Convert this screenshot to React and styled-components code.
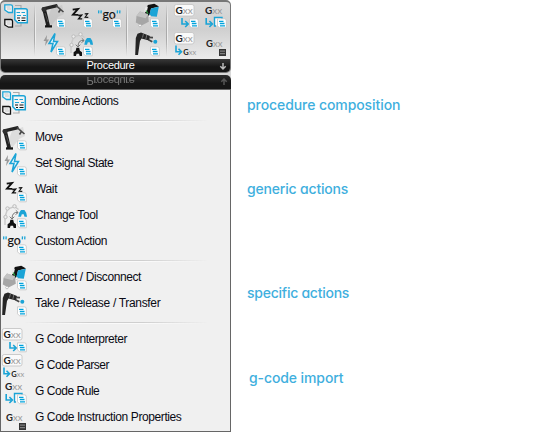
import React from 'react';
import styled, { createGlobalStyle } from 'styled-components';

const GlobalStyle = createGlobalStyle`
  * { box-sizing: border-box; }
  body { margin: 0; background: #fff; font-family: "Liberation Sans", Arial, sans-serif; }
`;

const Page = styled.div`
  display: grid;
  grid-template-columns: 231px 1fr;
  width: 542px;
  height: 432px;
  overflow: hidden;
`;
const Panel = styled.div`
  display: flex;
  flex-direction: column;
  height: 432px;
  background: linear-gradient(#fff 40px, #d8d8d8 40px);
`;
const Ribbon = styled.section`
  height: 73px;
  border: 1px solid #777;
  border-top: 2px solid #777;
  border-radius: 5px;
  overflow: hidden;
  background: linear-gradient(#dadada, #d0d0d0 40%, #eeeeee 85%);
`;
const Tools = styled.div`
  display: grid;
  grid-template-columns: 24px 13px 24px 3px 24px 5px 24px 14px 24px 15px 24px 4px 24px;
  grid-template-rows: 24px 24px;
  row-gap: 4px;
  padding: 2px 0 0 3px;
  height: 57px;
`;
const Tool = styled.div`
  grid-column: ${p => p.$col};
  grid-row: ${p => p.$row};
  width: 24px;
  height: 24px;
`;
const ToolDivider = styled.div`
  grid-column: ${p => p.$col};
  grid-row: 1 / 3;
  width: 2px;
  height: 52px;
  margin-left: ${p => p.$inset}px;
  background: linear-gradient(90deg, #aaa 50%, #eee 50%);
  mask-image: linear-gradient(transparent, #000 30%, #000 70%, transparent);
`;
const Caption = styled.div`
  display: grid;
  grid-template-columns: 1fr 11px;
  align-items: center;
  height: ${p => (p.$mirrored ? 14 : 13)}px;
  line-height: 12px;
  font-size: 11px;
  text-align: center;
  padding-left: 1px;
  color: ${p => (p.$mirrored ? '#777' : '#fff')};
  background: ${p => (p.$mirrored ? 'linear-gradient(#2c2c2c, #161616 60%)' : 'linear-gradient(#383838, #151515 60%)')};
  border-radius: ${p => (p.$mirrored ? '5px 5px 0 0' : '0')};
  margin-top: ${p => (p.$mirrored ? 2 : 0)}px;
`;
const CaptionText = styled.span`
  letter-spacing: -0.3px;
  padding-bottom: 4px;
  ${p => p.$mirrored && 'transform: scaleY(-1); padding-bottom: 0; margin-bottom: 2px;'}
`;
const Menu = styled.div`
  flex: 1;
  border: 1px solid #666;
  padding-left: 1px;
  background: #f0f0f0;
`;
const MenuRow = styled.div`
  display: grid;
  grid-template-columns: 33px 1fr;
  align-items: center;
  height: ${p => p.$h || 26}px;
  font-size: 12px;
  color: #0a0a14;
  white-space: nowrap;
`;
const MenuLabel = styled.span`
  line-height: 16px;
  padding-bottom: 3px;
  letter-spacing: ${p => p.$ls}px;
`;
const Separator = styled.div`
  height: 10px;
  padding: 5px 22px 0 22px;
  &::after {
    content: '';
    display: block;
    height: 2px;
    background: linear-gradient(#cfcfcf 50%, #fafafa 50%);
    mask-image: linear-gradient(90deg, transparent, #000 35%, #000 65%, transparent);
  }
`;
const Notes = styled.div`
  display: grid;
  grid-template-rows: 84px 104px 85px 30px;
  padding: 95px 0 0 16px;
  font-family: Inter, sans-serif;
  font-size: 14px;
  font-weight: 450;
  line-height: 20px;
  font-feature-settings: "cv11", "ss03";
  color: #3fafde;
`;
const Note = styled.div`
  margin-left: ${p => p.$indent || 0}px;
  letter-spacing: ${p => p.$ls || 0}px;
  white-space: nowrap;
`;
const Glyph = styled.svg`
  display: block;
  width: 24px;
  height: 24px;
  overflow: visible;
  font-family: Lato, "Open Sans", sans-serif;
`;

const BLUE = '#1ba4d6';

const Sheet = () => (
  <g>
    <path d="M15.5 14.8h6.8q2 0 2 2v7h-6.8l-2-2z" fill="#fff" stroke="#c4c4c4" strokeWidth=".8" />
    <path d="M17 17.3h4.5M17.8 19.5h4.7M18 21.8h5" stroke="#00a2dc" strokeWidth="1.3" />
  </g>
);
const Turn = ({ x = 7 }) => (
  <path d={`M${x} 14v6h5M${x + 3.2} 17l3 3-3 3`} fill="none" stroke={BLUE} strokeWidth="1.6" />
);
const Code = ({ boxed, x = 1.4, y = 9.5, size = 10 }) => (
  <g>
    {boxed && <rect x=".3" y=".5" width="19.7" height="11.5" rx="2" fill="#fafafa" stroke="#c6c6c6" strokeWidth=".9" />}
    <text x={x} y={y} fontSize={size} fontWeight="700" fill="#222">
      G<tspan fontWeight="400" fill="#999">xx</tspan>
    </text>
  </g>
);

const ICONS = {
  combine: (
    <g fill="#f4f4f4">
      <path d="M11 1.5h6v4M11 22h6v-4" fill="none" stroke="#aaa" strokeWidth="1.2" />
      <path d="M.8.8h6q1.7 0 1.7 1.7v6h-4L.8 6z" stroke={BLUE} strokeWidth="1.3" />
      <path d="M2.5 3h4M3 5h4" stroke="#bbb" strokeWidth=".8" />
      <path d="M.8 15.5h6q1.7 0 1.7 1.7v6h-4L.8 21z" stroke="#111" strokeWidth="1.3" />
      <path d="M2.5 18h4M3 20h4" stroke="#bbb" strokeWidth=".8" />
      <path d="M10.8 4.8h10.5q2 0 2 2v12h-9.5l-3-3z" stroke={BLUE} strokeWidth="1.5" />
      <path d="M12.5 8.5h3.5M17.5 8.5H21M13 11.5h4M19 11.5h3" stroke={BLUE} strokeWidth="1.2" />
      <path d="M13 14h3M17.5 14h4M14 16.5h2M17.5 16.5h4" stroke="#111" strokeWidth="1.2" />
    </g>
  ),
  move: (
    <g>
      <path d="M10 5l11-4 2 9-6 3-7 9-3-9z" fill="#999" opacity=".22" />
      <path d="M3.3 6L7.2 22" stroke="#202020" strokeWidth="3.7" />
      <path d="M2.3 4.8L15 1.8" stroke="#252525" strokeWidth="3.4" strokeLinecap="round" />
      <path d="M15 1.5l4.7 4.2M17.5 8.5l2-3 3 2.5" fill="none" stroke="#484848" strokeWidth="1.6" />
      <circle cx="3" cy="5.5" r="2.4" fill="#303030" />
      <path d="M4 21.3h7v2.3H4z" fill="#151515" />
      <path d="M4 9l3 9" stroke="#686868" strokeWidth=".6" />
      <Sheet />
    </g>
  ),
  signal: (
    <g>
      <path d="M6 3L2.5 9h2.3L4 14l4-6.5H5.6z" fill="#999" />
      <path d="M14 1.5L8 11.5h4L10 20l6.5-10.5h-4z" fill="#eef9fd" stroke={BLUE} strokeWidth="1.5" />
      <Sheet />
    </g>
  ),
  wait: (
    <g>
      <g fill="none" stroke="#111">
        <path d="M4.7 5.6l5.3-.7-5 5.8 5.4.2" strokeWidth="1.9" />
        <path d="M10.2 11.5l3.4-.3-3 3.6 3.6.1" strokeWidth="1.4" />
        <path d="M16.7 9.9l3-.2-2.6 3.6 3.2.1" strokeWidth="1.1" />
      </g>
      <Sheet />
    </g>
  ),
  change: (
    <g>
      <path d="M3 21V13l2.5-8 7-2.5 4 3" fill="none" stroke="#cacaca" strokeWidth="1.5" />
      <g fill="#eee" stroke="#bcbcbc">
        <circle cx="3.5" cy="13" r="1.7" /><circle cx="5.5" cy="4.5" r="1.7" /><circle cx="12.5" cy="2.3" r="1.7" />
      </g>
      <path d="M16 8.5q-6-1-6 6.5M13.8 6.3L16.2 8.6l-2.7 2M7.7 12.7L10 15l2.3-2.3" fill="none" stroke="#777" strokeWidth="1" />
      <path d="M16.3 12.7l.9-4L19 6h3.4l1.8 2.7.9 4h-2.6l-.8-2.5h-1.9L19 12.7z" fill={BLUE} />
      <path d="M5.6 24v-3.8l2.1-1.5.7-3h2.8l.7 3 2.1 1.5V24h-2.3l-.7-2.3H8.6L7.9 24z" fill="#111" />
      <Sheet />
    </g>
  ),
  custom: (
    <g>
      <text x="5.5" y="14.5" fontSize="13" fill="#111" stroke="#111" strokeWidth=".15" textLength="13.3" lengthAdjust="spacingAndGlyphs" fontFamily="Lato">go</text>
      <path d="M1.8 6.4l-.2 3M4.2 6.4l-.2 3M20.5 6.4l-.2 3M22.9 6.4l-.2 3" stroke={BLUE} strokeWidth="1.3" />
      <Sheet />
    </g>
  ),
  connect: (
    <g>
      <path d="M12.8 1l6.5-1.2 4.7 2.8-8 2-1.8 8-4.7-2.2z" fill="#111" />
      <path d="M10.5 3.3l2.4-.5-1.2 5.5-2.5-1z" fill="#e9e9e9" />
      <path d="M16 4.4l7.8-1.7-2 10L14 12z" fill={BLUE} />
      <path d="M5 7.5l8 2.8.8 7.5L6.5 21.5.8 18.5 1.5 12z" fill="#a6a6a6" />
      <path d="M5 7.5l8 2.8-2.3 4L1.5 12z" fill="#c3c3c3" />
      <path d="M11.2 6.5l1.8 3.3" stroke="#38a84a" strokeWidth="1.1" />
      <circle cx="5" cy="21.5" r="1.3" fill="#fff" stroke="#aaa" strokeWidth=".7" />
      <circle cx="14.7" cy="12.3" r="1.2" fill="#fff" stroke="#aaa" strokeWidth=".5" />
      <Sheet />
    </g>
  ),
  take: (
    <g>
      <path d="M.2 23L.8 6 2.5 1.8 6 .5l9 3.6-1 4.3-7.5-2L5 9 3 23z" fill="#252525" />
      <path d="M8.5 1.6l-1 4M11.8 3l-1 4.2" stroke="#888" strokeWidth=".8" />
      <path d="M14 5.3l4 .4M13.5 7.8l3.8 2" stroke="#444" strokeWidth="1.8" />
      <circle cx="20.3" cy="9.8" r="2" fill={BLUE} />
      <Sheet />
    </g>
  ),
  interpreter: <g><Code boxed /><Turn x={8} /><Sheet /></g>,
  parser: (
    <g>
      <Code boxed />
      <path d="M2 13.5v6.3h5M4.5 16.8l3 3-3 3" fill="none" stroke={BLUE} strokeWidth="1.6" />
      <Code x={9.3} y={22.7} size={7.5} />
    </g>
  ),
  rule: (
    <g>
      <Code x={3} />
      <Turn x={4.2} />
      <path d="M14 22h-1.5v-8.5H20v1.8" fill="#fafafa" stroke={BLUE} strokeWidth="1.4" />
      <Sheet />
    </g>
  ),
  properties: (
    <g>
      <Code x={4} y={15} size={9.5} />
      <path d="M17 17h7v7h-7z" fill="#353535" />
      <path d="M18 19.1h5M18 21.7h5" stroke="#aaa" strokeWidth=".8" />
    </g>
  ),
};

const Icon = ({ name }) => <Glyph viewBox="0 0 24 24" aria-hidden="true">{ICONS[name]}</Glyph>;

const Arrow = ({ up }) => (
  <svg width="8" height="8" viewBox="0 0 8 8">
    <path
      d={up ? 'M4 7V1M1.3 3.7L4 1l2.7 2.7' : 'M4 0v6M1.3 3.3L4 6l2.7-2.7'}
      fill="none" stroke={up ? '#555' : '#bbb'} strokeWidth="1.5"
    />
  </svg>
);

const TOOLS = [
  ['combine', 1, 1], ['move', 3, 1], ['signal', 3, 2], ['wait', 5, 1], ['change', 5, 2],
  ['custom', 7, 1], ['connect', 9, 1], ['take', 9, 2], ['interpreter', 11, 1],
  ['parser', 11, 2], ['rule', 13, 1], ['properties', 13, 2],
];

const GROUPS = [
  [['combine', 'Combine Actions', -0.45]],
  [
    ['move', 'Move', -0.5],
    ['signal', 'Set Signal State', -0.5],
    ['wait', 'Wait', -0.35],
    ['change', 'Change Tool', -0.4],
    ['custom', 'Custom Action', -0.42],
  ],
  [['connect', 'Connect / Disconnect', -0.4], ['take', 'Take / Release / Transfer', -0.32]],
  [
    ['interpreter', 'G Code Interpreter', -0.45],
    ['parser', 'G Code Parser', -0.46],
    ['rule', 'G Code Rule', -0.46],
    ['properties', 'G Code Instruction Properties', -0.4],
  ],
];

export default function App() {
  return (
    <Page>
      <GlobalStyle />
      <Panel>
        <Ribbon>
          <Tools>
            {TOOLS.map(([name, col, row]) => (
              <Tool key={name} $col={col} $row={row}><Icon name={name} /></Tool>
            ))}
            <ToolDivider $col={2} $inset={6} />
            <ToolDivider $col={8} $inset={5} />
            <ToolDivider $col={10} $inset={7} />
          </Tools>
          <Caption><CaptionText>Procedure</CaptionText><Arrow /></Caption>
        </Ribbon>
        <Caption $mirrored><CaptionText $mirrored>Procedure</CaptionText><Arrow up /></Caption>
        <Menu>
          {GROUPS.map((rows, i) => (
            <React.Fragment key={rows[0][0]}>
              {i > 0 && <Separator />}
              {rows.map(([icon, label, spacing]) => (
                <MenuRow key={icon} $h={i === 0 ? 25 : 26}>
                  <Icon name={icon} />
                  <MenuLabel $ls={spacing}>{label}</MenuLabel>
                </MenuRow>
              ))}
            </React.Fragment>
          ))}
        </Menu>
      </Panel>
      <Notes>
        <Note $ls={-0.08}>procedure composition</Note>
        <Note $ls={-0.18}>generic actions</Note>
        <Note $ls={-0.25}>specific actions</Note>
        <Note $indent={2} $ls={-0.1}>g-code import</Note>
      </Notes>
    </Page>
  );
}
